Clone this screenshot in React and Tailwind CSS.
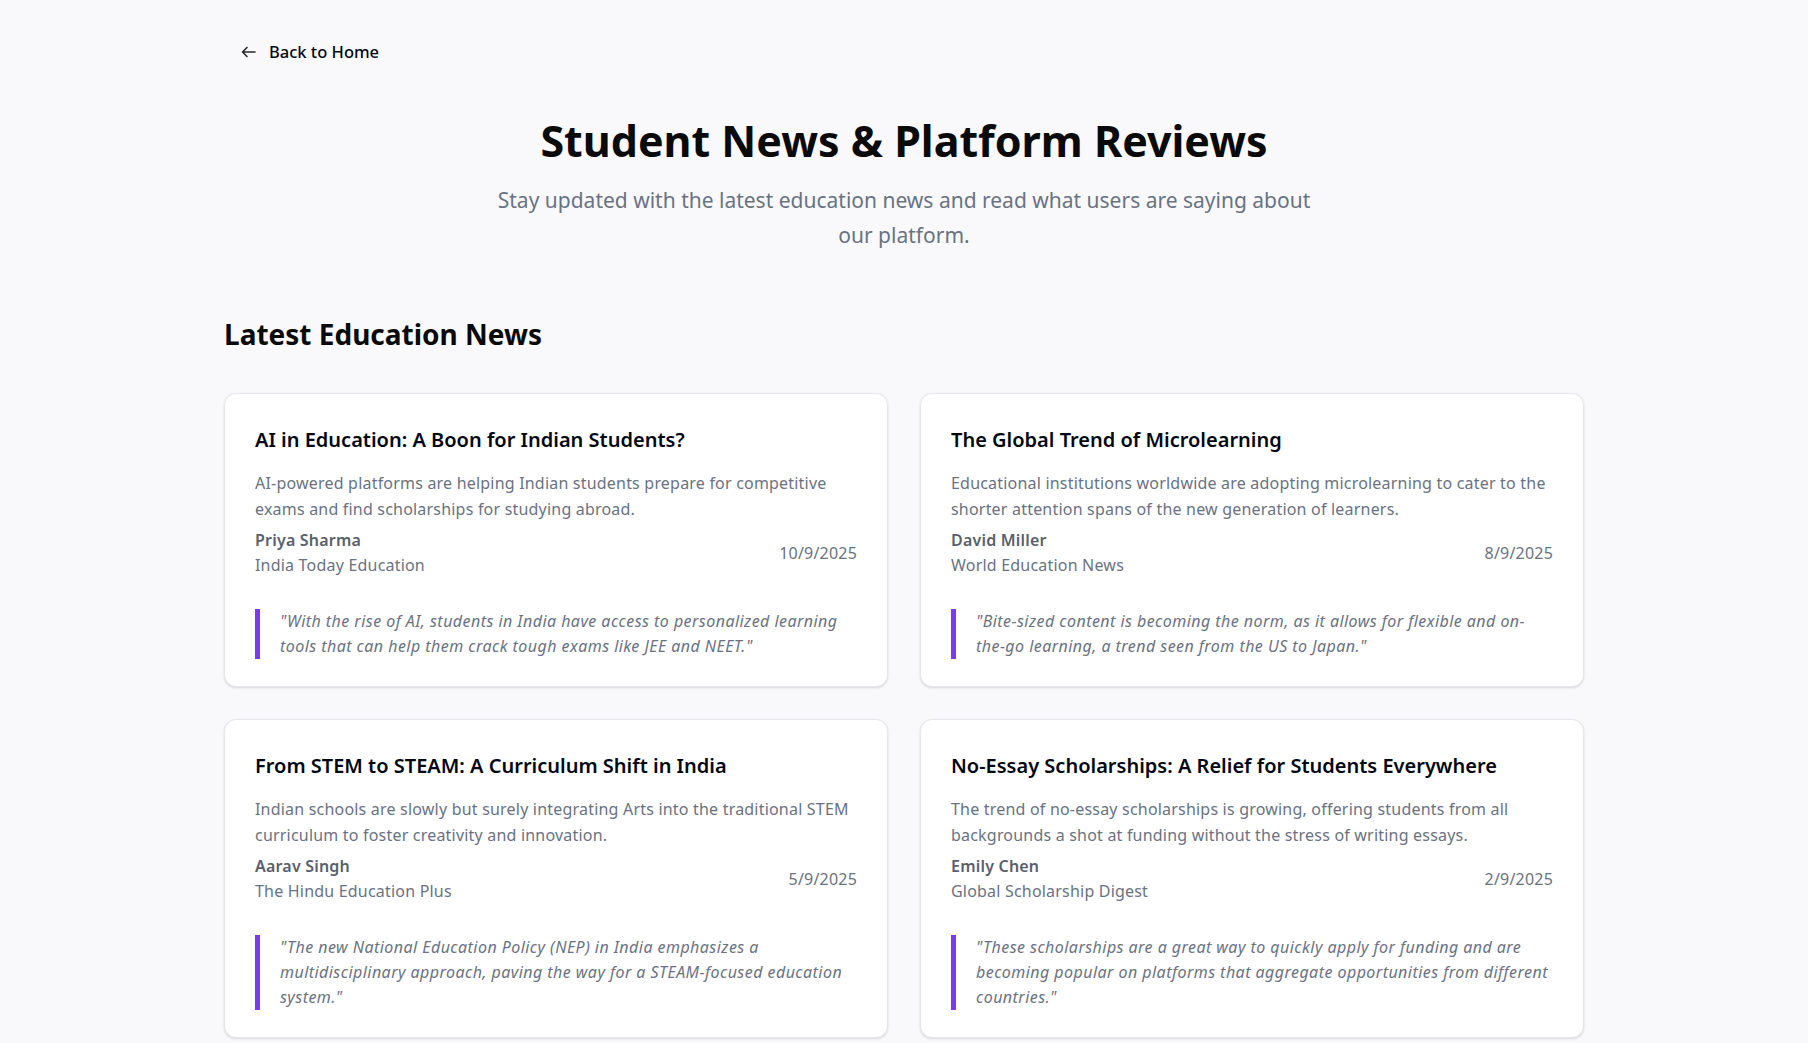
import React from "react";

const news = [
  {
    title: "AI in Education: A Boon for Indian Students?",
    desc: "AI-powered platforms are helping Indian students prepare for competitive exams and find scholarships for studying abroad.",
    author: "Priya Sharma",
    source: "India Today Education",
    date: "10/9/2025",
    quote: "\"With the rise of AI, students in India have access to personalized learning tools that can help them crack tough exams like JEE and NEET.\"",
  },
  {
    title: "The Global Trend of Microlearning",
    desc: "Educational institutions worldwide are adopting microlearning to cater to the shorter attention spans of the new generation of learners.",
    author: "David Miller",
    source: "World Education News",
    date: "8/9/2025",
    quote: "\"Bite-sized content is becoming the norm, as it allows for flexible and on-the-go learning, a trend seen from the US to Japan.\"",
  },
  {
    title: "From STEM to STEAM: A Curriculum Shift in India",
    desc: "Indian schools are slowly but surely integrating Arts into the traditional STEM curriculum to foster creativity and innovation.",
    author: "Aarav Singh",
    source: "The Hindu Education Plus",
    date: "5/9/2025",
    quote: "\"The new National Education Policy (NEP) in India emphasizes a multidisciplinary approach, paving the way for a STEAM-focused education system.\"",
  },
  {
    title: "No-Essay Scholarships: A Relief for Students Everywhere",
    desc: "The trend of no-essay scholarships is growing, offering students from all backgrounds a shot at funding without the stress of writing essays.",
    author: "Emily Chen",
    source: "Global Scholarship Digest",
    date: "2/9/2025",
    quote: "\"These scholarships are a great way to quickly apply for funding and are becoming popular on platforms that aggregate opportunities from different countries.\"",
  },
];

function NewsCard({ item }) {
  return (
    <article className="rounded-xl border border-gray-200 bg-white px-[30px] pt-[32px] pb-[27px] shadow-sm">
      <h3 className="text-xl font-semibold leading-7 text-gray-950">{item.title}</h3>
      <p className="mt-[17px] text-base leading-[25.5px] tracking-[0.2px] text-gray-500">{item.desc}</p>
      <div className="mt-[6px] flex items-center justify-between">
        <div className="flex flex-col">
          <span className="text-base font-semibold leading-[25px] tracking-[0.2px] text-[#5a606b]">{item.author}</span>
          <span className="text-base leading-[25px] tracking-[0.2px] text-gray-500">{item.source}</span>
        </div>
        <span className="text-base leading-[25px] tracking-[0.2px] text-gray-500">{item.date}</span>
      </div>
      <blockquote className="mt-[31px] border-l-[5px] border-[#7c3aed] pl-5 text-base italic leading-[25px] tracking-[0.45px] text-gray-500">
        {item.quote}
      </blockquote>
    </article>
  );
}

export default function App() {
  return (
    <div className="min-h-screen bg-[#f9f9fb] font-['Noto_Sans',sans-serif] text-gray-900">
      <div className="mx-auto max-w-[1360px] pt-8 pb-16">
        <button className="inline-flex items-center gap-[13px] px-4 py-2 text-[16.5px] font-medium leading-6 text-gray-950">
          <svg width="16" height="16" viewBox="0 0 16 16" fill="none" stroke="#27272a" strokeWidth="1.6" strokeLinecap="round" strokeLinejoin="round">
            <path d="M7 3.5 2.5 8 7 12.5M2.5 8H15" />
          </svg>
          Back to Home
        </button>

        <header className="mt-[43px] flex flex-col items-center text-center">
          <h1 className="text-[43px] font-bold leading-[52px] text-[#0a0a0a]">Student News &amp; Platform Reviews</h1>
          <p className="mt-4 max-w-[840px] text-[21px] leading-[34.6px] text-gray-500">
            Stay updated with the latest education news and read what users are saying about our platform.
          </p>
        </header>

        <section className="mt-16">
          <h2 className="text-[28px] font-bold leading-9 text-[#0a0a0a]">Latest Education News</h2>
          <div className="mt-[41px] grid grid-cols-2 gap-8">
            {news.map((n) => (
              <NewsCard key={n.title} item={n} />
            ))}
          </div>
        </section>
      </div>
    </div>
  );
}
